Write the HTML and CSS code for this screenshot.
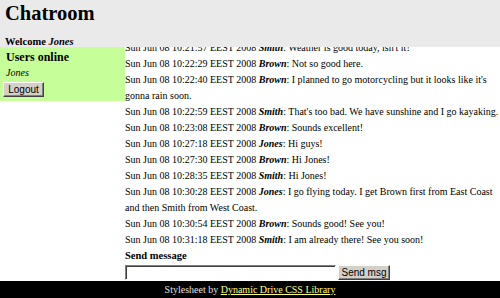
FILE: index.html
```html
<!DOCTYPE html>
<html>
<head>
<meta charset="utf-8">
<title>Chatroom</title>
<link rel="stylesheet" href="styles.css">
</head>
<body>
<div class="header">
  <h1 class="title">Chatroom</h1>
  <div class="welcome">Welcome <i>Jones</i></div>
</div>
<div class="main">
  <div class="sidebar">
    <h3 class="users-title">Users online</h3>
    <div class="user"><i>Jones</i></div>
    <button class="btn logout">Logout</button>
  </div>
  <div class="content">
    <div class="log">
      <div class="log-inner">
        Sun Jun 08 10:21:57 EEST 2008 <b><i>Smith</i></b>: Weather is good today, isn't it!<br>
        Sun Jun 08 10:22:29 EEST 2008 <b><i>Brown</i></b>: Not so good here.<br>
        Sun Jun 08 10:22:40 EEST 2008 <b><i>Brown</i></b>: I planned to go motorcycling but it looks like it's gonna rain soon.<br>
        Sun Jun 08 10:22:59 EEST 2008 <b><i>Smith</i></b>: That's too bad. We have sunshine and I go kayaking.<br>
        Sun Jun 08 10:23:08 EEST 2008 <b><i>Brown</i></b>: Sounds excellent!<br>
        Sun Jun 08 10:27:18 EEST 2008 <b><i>Jones</i></b>: Hi guys!<br>
        Sun Jun 08 10:27:30 EEST 2008 <b><i>Brown</i></b>: Hi Jones!<br>
        Sun Jun 08 10:28:35 EEST 2008 <b><i>Smith</i></b>: Hi Jones!<br>
        Sun Jun 08 10:30:28 EEST 2008 <b><i>Jones</i></b>: I go flying today. I get Brown first from East Coast and then Smith from West Coast.<br>
        Sun Jun 08 10:30:54 EEST 2008 <b><i>Brown</i></b>: Sounds good! See you!<br>
        Sun Jun 08 10:31:18 EEST 2008 <b><i>Smith</i></b>: I am already there! See you soon!
      </div>
    </div>
    <div class="send-label">Send message</div>
    <form class="send-form">
      <input class="msg-input" type="text">
      <button class="btn send" type="button">Send msg</button>
    </form>
  </div>
</div>
<div class="footer">Stylesheet by <a href="#" class="footer-link">Dynamic Drive CSS Library</a></div>
</body>
</html>
```
FILE: styles.css
```css
html, body {
  margin: 0;
  padding: 0;
}
body {
  font-family: "Liberation Serif", "Times New Roman", serif;
  font-size: 10px;
  color: #000;
  background: #fff;
  width: 500px;
  height: 298px;
  overflow: hidden;
}
.header {
  background: #eaeaea;
  height: 47px;
  padding: 0 5px;
  box-sizing: border-box;
}
.title {
  margin: 0;
  padding-top: 1px;
  font-size: 20.5px;
  line-height: 24px;
  font-weight: bold;
}
.welcome {
  font-weight: bold;
  margin-top: 10px;
  line-height: 14px;
  font-size: 10.5px;
}
.welcome i {
  font-weight: bold;
}
.main {
  display: flex;
  align-items: flex-start;
}
.sidebar {
  width: 125px;
  box-sizing: border-box;
  background: #c6ff99;
  padding: 3px 3px 3px 3px;
  height: 54px;
}
.users-title {
  margin: 0 0 0 3px;
  font-size: 12px;
  line-height: 14px;
}
.user {
  margin-left: 3px;
  line-height: 14px;
  margin-top: 2px;
}
.btn {
  font-family: "Liberation Sans", Arial, sans-serif;
  font-size: 10px;
  background: #d4d0c8;
  color: #000;
  border: 1px solid;
  border-color: #fff #404040 #404040 #fff;
  box-shadow: inset -1px -1px 0 #808080;
  padding: 0 6px;
  height: 15px;
  line-height: 13px;
}
.logout {
  margin-top: 2px;
  width: 41px;
  padding: 0;
}
.content {
  flex: 1;
}
.log {
  height: 201px;
  overflow: hidden;
}
.log-inner {
  margin-top: -7px;
  line-height: 16px;
}
.send-label {
  font-weight: bold;
  line-height: 16px;
  font-size: 10.5px;
}
.send-form {
  margin: 0;
  display: flex;
  align-items: center;
  height: 16px;
}
.msg-input {
  width: 211px;
  height: 15px;
  box-sizing: border-box;
  margin: 0 2px 0 0;
  border: 1px solid;
  border-color: #808080 #fff #fff #808080;
  box-shadow: inset 1px 1px 0 #404040;
  padding: 0;
}
.send {
  width: 52px;
  padding: 0;
}
.footer {
  background: #000;
  color: #e0e0e0;
  text-align: center;
  height: 18px;
  line-height: 17px;
  margin-top: 1px;
}
.footer-link {
  color: #ffff80;
  text-decoration: underline;
}
```
